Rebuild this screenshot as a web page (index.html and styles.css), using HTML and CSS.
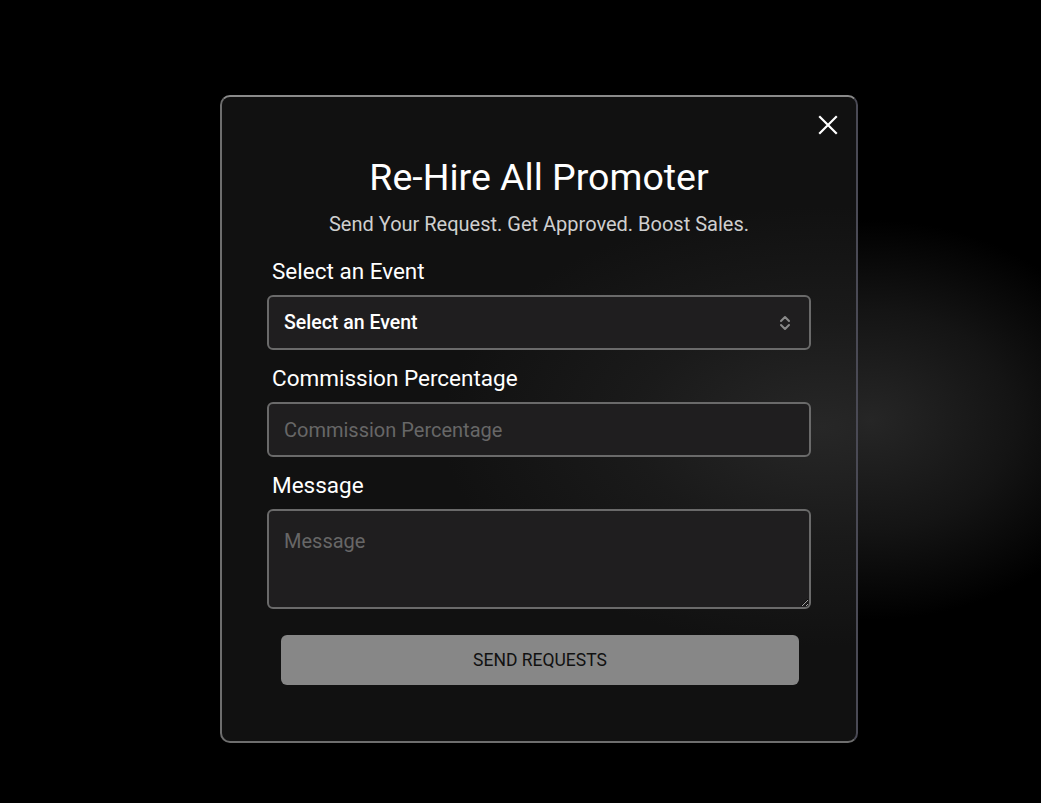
FILE: index.html
```html
<!DOCTYPE html>
<html lang="en">
<head>
<meta charset="utf-8">
<title>Re-Hire All Promoter</title>
<link rel="stylesheet" href="styles.css">
</head>
<body>
<div class="backdrop">
  <div class="modal">
    <button class="close" aria-label="Close">
      <svg width="20" height="20" viewBox="0 0 20 20"><path d="M2 2 L18 18 M18 2 L2 18" stroke="#fff" stroke-width="2.2" stroke-linecap="square" fill="none"/></svg>
    </button>
    <h1 class="title">Re-Hire All Promoter</h1>
    <p class="subtitle">Send Your Request. Get Approved. Boost Sales.</p>
    <form class="form">
      <label class="label">Select an Event</label>
      <div class="select">
        <span class="select-text">Select an Event</span>
        <svg class="chevron" width="12" height="18" viewBox="0 0 12 18"><path d="M2 7 L6 3 L10 7 M2 11 L6 15 L10 11" stroke="#8a8a8a" stroke-width="2" fill="none" stroke-linecap="round" stroke-linejoin="round"/></svg>
      </div>
      <label class="label">Commission Percentage</label>
      <input class="field" type="text" placeholder="Commission Percentage">
      <label class="label">Message</label>
      <textarea class="field area" placeholder="Message"></textarea>
      <div class="actions">
        <button type="button" class="submit">SEND REQUESTS</button>
      </div>
    </form>
  </div>
</div>
</body>
</html>
```
FILE: styles.css
```css
* { box-sizing: border-box; }
html, body { margin: 0; height: 100%; }
body {
  font-family: Roboto, "Liberation Sans", sans-serif;
  background: radial-gradient(ellipse 260px 200px at 870px 420px, #262626 0%, #141414 55%, #000 100%), #000;
  color: #fff;
}
.backdrop {
  display: flex;
  justify-content: flex-start;
  padding-top: 95px;
  padding-left: 220px;
}
.modal {
  position: relative;
  width: 638px;
  height: 648px;
  border: 2px solid #6e6e6e;
  border-top-color: #8a8a8a;
  border-right-color: #4a4a55;
  border-radius: 10px;
  background: radial-gradient(ellipse 380px 220px at 600px 330px, #272727 0%, #1a1a1a 50%, #111 100%), #111;
  padding: 58px 45px 0 45px;
}
.close {
  position: absolute;
  top: 18px;
  right: 18px;
  background: none;
  border: 0;
  padding: 0;
  width: 20px;
  height: 20px;
  cursor: pointer;
}
.close svg { display: block; }
.title {
  margin: 0;
  font-size: 37.5px;
  font-weight: 400;
  line-height: 44px;
  text-align: center;
  color: #fff;
}
.subtitle {
  margin: 12px 0 0;
  font-size: 20px;
  line-height: 26px;
  text-align: center;
  color: #cfcfcf;
}
.form {
  display: flex;
  flex-direction: column;
  margin-top: 20px;
}
.label {
  font-size: 22.5px;
  line-height: 28px;
  padding-left: 5px;
  color: #fff;
  margin-bottom: 10px;
}
.select, .field {
  height: 55px;
  border: 2px solid #6a6a6a;
  border-radius: 6px;
  background: #1f1e1f;
  margin-bottom: 14px;
}
.select {
  display: flex;
  align-items: center;
  justify-content: space-between;
  padding: 0 18px 0 15px;
}
.select-text {
  font-size: 19.5px;
  font-weight: 500;
  color: #fff;
}
.field {
  width: 100%;
  padding: 0 15px;
  font-family: inherit;
  font-size: 20px;
  color: #fff;
  outline: none;
}
.field::placeholder { color: #676767; }
.area {
  height: 100px;
  padding-top: 18px;
  resize: vertical;
  color-scheme: dark;
  margin-bottom: 0;
}
.actions {
  display: flex;
  justify-content: center;
  margin-top: 26px;
}
.submit {
  width: 518px;
  height: 50px;
  background: #878787;
  border: 0;
  border-radius: 6px;
  font-family: inherit;
  font-size: 17.5px;
  color: #111;
  margin-left: 2px;
}
```
